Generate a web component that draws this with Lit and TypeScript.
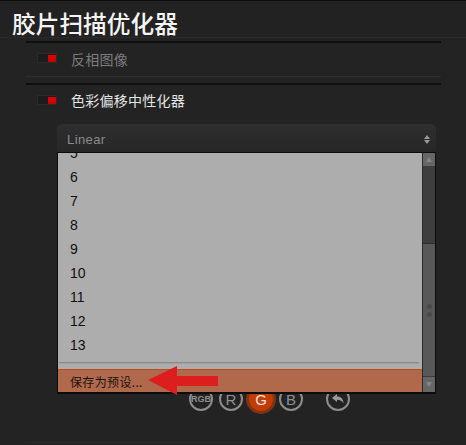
import { LitElement, html, css } from "lit";
import { customElement } from "lit/decorators.js";

@customElement("app-root")
export class AppRoot extends LitElement {
  static styles = css`
    :host {
      display: block;
      width: 466px;
      height: 445px;
      overflow: hidden;
      background: #232323;
      font-family: "Noto Sans CJK SC", "Liberation Sans", sans-serif;
      box-sizing: border-box;
      border-top: 1px solid #0c0c0c;
    }
    .header {
      height: 37px;
      box-sizing: border-box;
      border-bottom: 1px solid #2b2b2b;
      padding-left: 12px;
      color: #f4f4f4;
      font-size: 23.7px;
      font-weight: 500;
      line-height: 45px;
      white-space: nowrap;
      background: #222;
    }
    .section {
      margin: 0 25px 0 26px;
    }
    .rule {
      height: 2px;
      background: #0e0e0e;
    }
    .rule.first { margin-top: 3px; }
    .row {
      display: flex;
      align-items: center;
      gap: 14px;
      padding-left: 11px;
    }
    .row.r1 {
      height: 33px;
      border-bottom: 1px solid #2d2d2d;
    }
    .gap { height: 6px; }
    .row.r2 { height: 32px; }
    .toggle {
      width: 20px;
      height: 10px;
      box-sizing: border-box;
      background: #1c1c1c;
      border: 1px solid #2a2a27;
      display: flex;
      justify-content: flex-end;
      align-items: flex-start;
      margin-top: -3px;
    }
    .toggle i {
      display: block;
      width: 8px;
      height: 7px;
      margin-top: 1px;
      background: linear-gradient(#e40000, #c40000);
    }
    .label {
      font-size: 14px;
      letter-spacing: 0.25px;
      line-height: 20px;
      white-space: nowrap;
      margin-top: -2px;
    }
    .label.dim { color: #7c7c7c; }
    .label.on { color: #e4e4e4; }
    .selectwrap {
      position: relative;
      margin: 7px 5px 0 31px;
    }
    .select {
      height: 28px;
      box-sizing: border-box;
      background: linear-gradient(#2e2e2e, #272727);
      border-radius: 5px 5px 0 0;
      padding: 2px 6px 0 10px;
      display: flex;
      align-items: center;
      justify-content: space-between;
      color: #8a8a8a;
      font-family: "Liberation Sans", sans-serif;
      font-size: 13px;
      letter-spacing: 0.4px;
    }
    .updown {
      display: flex;
      flex-direction: column;
      gap: 1px;
    }
    .updown svg { display: block; }
    .menu {
      position: absolute;
      left: 0;
      right: 0;
      top: 28px;
      height: 242px;
      box-sizing: border-box;
      border: 1px solid #0c0c0c;
      border-bottom-width: 2px;
      display: flex;
      background: #adadad;
    }
    .list {
      flex: 1;
      min-width: 0;
      display: flex;
      flex-direction: column;
      overflow: hidden;
    }
    .items {
      height: 209px;
      flex: none;
      overflow: hidden;
      color: #111;
      font-family: "Liberation Sans", sans-serif;
      font-size: 14px;
    }
    .item {
      height: 24px;
      line-height: 24px;
      padding-left: 12px;
    }
    .item.cut { margin-top: -12px; }
    .sep {
      height: 1px;
      flex: none;
      margin: 0 3px 0 1px;
      background: #8b8b8b;
      border-bottom: 1px solid #a0a0a0;
    }
    .save {
      margin-top: 5px;
      flex: 1;
      background: #b1694b;
      border-top: 1px solid #b84c1c;
      border-bottom: 1px solid #b84c1c;
      padding-left: 12px;
      color: #1c130e;
      font-size: 12px;
      letter-spacing: 0.35px;
      line-height: 23px;
      white-space: nowrap;
    }
    .scroll {
      width: 12px;
      flex: none;
      border-left: 1px solid #2a2a2a;
      background: #555;
      display: flex;
      flex-direction: column;
    }
    .sbtn {
      height: 13px;
      flex: none;
      background: #666;
      display: flex;
      align-items: center;
      justify-content: center;
    }
    .sbtn.bottom {
      height: 15px;
      border-top: 1px solid #3a3a3a;
    }
    .thumb {
      height: 77px;
      flex: none;
      background: #3e3e3e;
      border-bottom: 1px solid #2f2f2f;
    }
    .track {
      flex: 1;
      background: #585858;
      display: flex;
      flex-direction: column;
      align-items: center;
      gap: 3px;
      padding-top: 60px;
    }
    .track i {
      display: block;
      width: 5px;
      height: 5px;
      border-radius: 50%;
      background: #4a4a4a;
    }
    .arrow {
      position: absolute;
      left: 90px;
      top: 241px;
    }
    .btns {
      display: flex;
      align-items: center;
      margin: 0 0 0 189px;
      padding-top: 235px;
      height: 24px;
      box-sizing: content-box;
    }
    .c {
      width: 24px;
      height: 24px;
      border: 2px solid #8d8d8d;
      border-radius: 50%;
      box-sizing: border-box;
      flex: none;
      display: flex;
      align-items: center;
      justify-content: center;
      color: #8f8f8f;
      font-family: "Liberation Sans", sans-serif;
      font-size: 15px;
      margin-right: 6px;
    }
    .c.rgb {
      font-size: 9px;
      font-weight: bold;
    }
    .c.g {
      background: #c33c00;
      border-color: #c33c00;
      color: #f0e6e0;
      box-shadow: 0 0 0 3px #7e3315;
    }
    .c.back { margin-left: 17px; }
    .foot {
      margin: 31px 25px 0 26px;
      height: 1px;
      background: #2a2a2a;
    }
  `;

  render() {
    const nums = [6, 7, 8, 9, 10, 11, 12, 13];
    return html`
      <div class="header">胶片扫描优化器</div>
      <div class="section">
        <div class="rule first"></div>
        <div class="row r1">
          <div class="toggle"><i></i></div>
          <div class="label dim">反相图像</div>
        </div>
        <div class="gap"></div>
        <div class="rule"></div>
        <div class="row r2">
          <div class="toggle"><i></i></div>
          <div class="label on">色彩偏移中性化器</div>
        </div>
      </div>
      <div class="section">
        <div class="selectwrap">
          <div class="select">
            <span>Linear</span>
            <span class="updown">
              <svg width="6" height="4" viewBox="0 0 6 4"><path d="M3 0 6 4H0Z" fill="#9a9a9a"/></svg>
              <svg width="6" height="4" viewBox="0 0 6 4"><path d="M0 0H6L3 4Z" fill="#9a9a9a"/></svg>
            </span>
          </div>
          <div class="menu">
            <div class="list">
              <div class="items">
                <div class="item cut">5</div>
                ${nums.map((n) => html`<div class="item">${n}</div>`)}
              </div>
              <div class="sep"></div>
              <div class="save">保存为预设...</div>
            </div>
            <div class="scroll">
              <div class="sbtn">
                <svg width="6" height="5" viewBox="0 0 6 5"><path d="M3 0 6 5H0Z" fill="#858585"/></svg>
              </div>
              <div class="thumb"></div>
              <div class="track"><i></i><i></i></div>
              <div class="sbtn bottom">
                <svg width="6" height="5" viewBox="0 0 6 5"><path d="M0 0H6L3 5Z" fill="#858585"/></svg>
              </div>
            </div>
          </div>
          <svg class="arrow" width="72" height="30" viewBox="0 0 72 30">
            <path d="M1 15 30 1V11H71V21H30V30Z" fill="#dc1e1e"/>
          </svg>
        </div>
      </div>
      <div class="btns">
        <div class="c rgb">RGB</div>
        <div class="c">R</div>
        <div class="c g">G</div>
        <div class="c">B</div>
        <div class="c back">
          <svg width="14" height="12" viewBox="0 0 14 12">
            <path d="M1 5 6 1V3.4C10 3.4 12.5 6 12.5 10.5 11 8 9.5 6.8 6 6.8V9Z" fill="#9a9a9a"/>
          </svg>
        </div>
      </div>
      <div class="foot"></div>
    `;
  }
}
